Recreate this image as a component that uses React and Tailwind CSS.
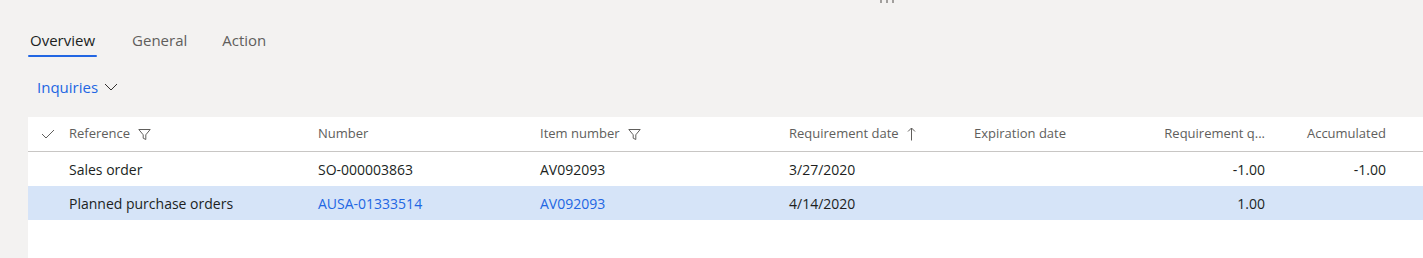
import React from 'react';

const font = { fontFamily: '"Open Sans", "Noto Sans", Arial, sans-serif' };

const columns = [
    { label: 'Reference', width: 'w-[249px]', filter: true },
    { label: 'Number', width: 'w-[222px]' },
    { label: 'Item number', width: 'w-[249px]', filter: true },
    { label: 'Requirement date', width: 'w-[185px]', sort: true },
    { label: 'Expiration date', width: 'w-[151px]' },
    { label: 'Requirement q...', width: 'w-[152px]', right: true },
    { label: 'Accumulated', width: 'w-[121px]', right: true },
];

const rows = [
    { cells: ['Sales order', 'SO-000003863', 'AV092093', '3/27/2020', '', '-1.00', '-1.00'], selected: false },
    { cells: ['Planned purchase orders', 'AUSA-01333514', 'AV092093', '4/14/2020', '', '1.00', ''], selected: true, links: [1, 2] },
];

function FilterIcon() {
    return (
        <svg width="13" height="13" viewBox="0 0 13 13" fill="none" stroke="#605e5c" strokeWidth="1">
            <path d="M0.8 1.5h11.4L7.8 6.8v4.7L5.2 10.2V6.8z" strokeLinejoin="round" />
        </svg>
    );
}

export default function App() {
    return (
        <div className="relative w-[1423px] h-[258px] bg-[#f3f2f1] overflow-hidden" style={font}>
            {/* cut-off overflow dots at the top */}
            <div className="absolute left-[880px] top-0 flex gap-[4px]">
                <span className="w-[2px] h-[3px] bg-[#a19f9d]" />
                <span className="w-[2px] h-[3px] bg-[#a19f9d]" />
                <span className="w-[2px] h-[3px] bg-[#a19f9d]" />
            </div>

            {/* tabs */}
            <div className="flex pl-[28px] pt-[29px] gap-[35px] text-[15px] leading-[22px]">
                <div className="flex flex-col items-stretch">
                    <span className="px-[2px] text-[#201f1e]">Overview</span>
                    <span className="mt-[4px] h-[2px] bg-[#2266e3] rounded-full" />
                </div>
                <span className="text-[#605e5c]">General</span>
                <span className="text-[#605e5c]">Action</span>
            </div>

            {/* inquiries menu */}
            <div className="flex items-center pl-[37px] mt-[19px] h-[22px] text-[15px] text-[#2266e3]">
                <span>Inquiries</span>
                <svg className="ml-[6px]" width="14" height="8" viewBox="0 0 14 8" fill="none" stroke="#323130" strokeWidth="1">
                    <path d="M1 1l6 6 6-6" />
                </svg>
            </div>

            {/* grid */}
            <div className="absolute left-[28px] top-[117px] right-0 bottom-0 bg-white text-[14px]">
                <div className="flex items-center h-[35px] border-b border-[#c8c6c4] text-[13px] text-[#605e5c]">
                    <div className="w-[41px] flex justify-center pr-[2px]">
                        <svg width="14" height="10" viewBox="0 0 14 10" fill="none" stroke="#605e5c" strokeWidth="1">
                            <path d="M1 5l4 4 8-8" />
                        </svg>
                    </div>
                    {columns.map(col => (
                        <div key={col.label} className={`${col.width} flex items-center gap-[8px] ${col.right ? 'justify-end pr-[12px]' : ''}`}>
                            <span>{col.label}</span>
                            {col.filter && <FilterIcon />}
                            {col.sort && (
                                <svg width="9" height="14" viewBox="0 0 9 14" fill="none" stroke="#605e5c" strokeWidth="1">
                                    <path d="M4.5 13.5V1M1 4.5l3.5-3.5 3.5 3.5" />
                                </svg>
                            )}
                        </div>
                    ))}
                </div>
                {rows.map((row, i) => (
                    <div key={i} className={`flex items-center h-[34px] text-[#201f1e] ${row.selected ? 'bg-[#d6e4f8]' : ''}`}>
                        <div className="w-[41px]" />
                        {row.cells.map((cell, j) => (
                            <div
                                key={j}
                                className={`${columns[j].width} ${columns[j].right ? 'text-right pr-[12px]' : ''} ${row.links && row.links.includes(j) ? 'text-[#2266e3]' : ''}`}
                            >
                                {cell}
                            </div>
                        ))}
                    </div>
                ))}
            </div>
        </div>
    );
}
